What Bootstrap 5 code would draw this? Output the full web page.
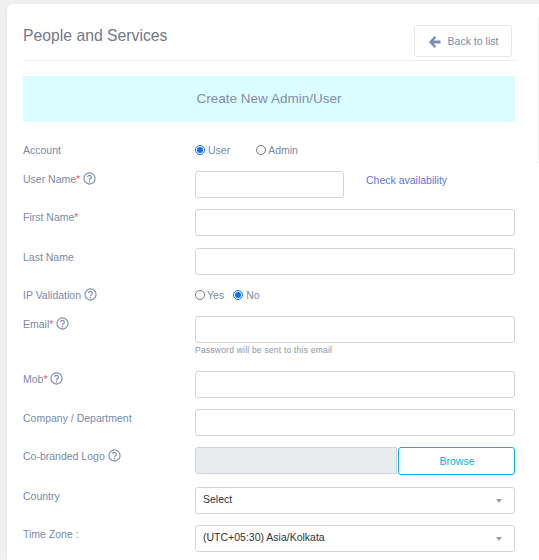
<!DOCTYPE html>
<html lang="en"><head><meta charset="utf-8"><title>People and Services</title>
<link href="https://cdn.jsdelivr.net/npm/bootstrap@5.3.0/dist/css/bootstrap.min.css" rel="stylesheet">
<style>
html,body{height:560px;overflow:hidden}
body{background:#eef0f2;font-family:"Liberation Sans",Arial,sans-serif;font-size:11px;color:#7a8ba8;padding:4px 0 0 7px}
.sheet{background:#fff;border-radius:6px 0 0 0;height:556px;padding:21px 24px 0 16px;box-shadow:-1px 0 3px rgba(0,0,0,.03);position:relative}
.sheet::after{content:"";position:absolute;right:0;top:14px;height:145px;width:1px;background:#eeeff2}
.pagehead{height:36px;border-bottom:1px solid #ebebeb;margin-bottom:15px}
.pagetitle{font-size:15.75px;font-weight:400;color:#74788d;margin:1px 0 0;line-height:20px}
.backbtn{width:98px;height:32px;margin-right:3px;border:1px solid #e6e7ec;border-radius:3px;font-size:10.5px;color:#7a8ba8;padding:1px 0 0;background:#fff;gap:7px}
.banner{background:#dcfdff;height:46px;font-size:13.5px;color:#7f8fa8;margin-bottom:21px}
.lab{width:172px;flex:none;font-size:10.5px;color:#7a8ba8;line-height:13px}
.p1{padding-top:1px}.p2{padding-top:2px}.p3{padding-top:3px}
.req{color:#f1556c}
.tip{width:13px;height:13px;vertical-align:-2px}
.fld{height:27px;border:1px solid #d2d3dd;border-radius:3px;background:#fff;padding:0 8px;font-size:10.5px;color:#333;box-shadow:none}
.rad{width:10px;height:10px;margin:0 3px 0 0;accent-color:#0d6efd;transform:translateY(-1px)}
.rad2{margin-right:2px}
.radtxt{font-size:10.5px;color:#7a8ba8;height:13px}
.radgap{margin-right:26px}.radgap2{margin-right:9px}
.ipline{margin-top:1px}
.chk{font-size:10.5px;color:#5a77e8;text-decoration:none;margin-left:22px;margin-top:3px;line-height:13px}
.hint{font-size:8.5px;color:#8b97a8;line-height:11px;margin-top:2px;letter-spacing:.22px}
.logofld{background:#e9ecef;flex:1 1 auto;border-radius:3px 0 0 3px}
.browse{width:117px;height:28px;border:1px solid #00bcd4;border-radius:3px;color:#00bcd4;background:#fff;font-size:10.5px;padding:2px 0 0 1px;margin-left:1px}
.sel{font-size:10.5px;color:#333;line-height:22px;position:relative;padding-left:7px}
.sel::after{content:"";position:absolute;right:12px;top:11px;border:3px solid transparent;border-top:4px solid #999ca3;border-bottom:0}
.w-user{width:149px}
.flex-1f{flex:1 1 auto}
.r-acc{height:28px;padding-top:1px}.r-user{height:38px}.r-std{height:39px}.r-ip{height:29px;padding-top:1px}.r-mail{height:55px}.r-mob{height:38px}.r-logo{height:40px}
.row-line{width:492px}
</style></head>
<body>
<main class="sheet">
 <div class="pagehead d-flex justify-content-between align-items-start row-line">
  <h1 class="pagetitle">People and Services</h1>
  <a class="btn backbtn d-flex align-items-center justify-content-center" href="#" role="button">
   <svg width="13" height="12" viewBox="0 0 13 12" aria-hidden="true"><path d="M6.500 0 1 6l5.500 6 1.700-1.800L5.600 7.600H12.500V4.400H5.600L8.200 1.800z" fill="#7890ad"/></svg>Back to list</a>
 </div>
 <div class="banner d-flex align-items-center justify-content-center row-line">Create New Admin/User</div>
 <form class="row-line">
  <div class="d-flex r-acc"><div class="lab">Account</div>
   <div class="d-flex align-items-center radtxt align-self-start"><input class="rad" type="radio" name="ac" checked><span class="radgap">User</span><input class="rad rad2" type="radio" name="ac"><span>Admin</span></div></div>
  <div class="d-flex r-user"><div class="lab p1">User Name<span class="req">*</span> <svg class="tip" viewBox="0 0 14 14"><use href="#q"/></svg></div>
   <input class="fld w-user" type="text" aria-label="User Name"><a class="chk" href="#">Check availability</a></div>
  <div class="d-flex r-std"><div class="lab p2">First Name<span class="req">*</span></div><input class="fld flex-1f" type="text" aria-label="First Name"></div>
  <div class="d-flex r-std"><div class="lab p3">Last Name</div><input class="fld flex-1f" type="text" aria-label="Last Name"></div>
  <div class="d-flex r-ip"><div class="lab">IP Validation <svg class="tip" viewBox="0 0 14 14"><use href="#q"/></svg></div>
   <div class="d-flex align-items-center radtxt align-self-start ipline"><input class="rad rad2" type="radio" name="ip"><span class="radgap2">Yes</span><input class="rad" type="radio" name="ip" checked><span>No</span></div></div>
  <div class="d-flex r-mail"><div class="lab p1">Email<span class="req">*</span> <svg class="tip" viewBox="0 0 14 14"><use href="#q"/></svg></div>
   <div class="flex-1f"><input class="fld w-100 d-block" type="text" aria-label="Email"><div class="hint">Password will be sent to this email</div></div></div>
  <div class="d-flex r-mob"><div class="lab p1">Mob<span class="req">*</span> <svg class="tip" viewBox="0 0 14 14"><use href="#q"/></svg></div><input class="fld flex-1f" type="text" aria-label="Mob"></div>
  <div class="d-flex r-mob"><div class="lab p3">Company / Department</div><input class="fld flex-1f" type="text" aria-label="Company"></div>
  <div class="d-flex r-logo"><div class="lab p2">Co-branded Logo <svg class="tip" viewBox="0 0 14 14"><use href="#q"/></svg></div>
   <div class="d-flex flex-1f align-items-start"><div class="fld logofld"></div><button class="btn browse" type="button">Browse</button></div></div>
  <div class="d-flex r-mob"><div class="lab p3">Country</div><div class="fld flex-1f sel">Select</div></div>
  <div class="d-flex r-mob"><div class="lab p3">Time Zone :</div><div class="fld flex-1f sel">(UTC+05:30) Asia/Kolkata</div></div>
 </form>
</main>
<svg width="0" height="0" class="d-block" aria-hidden="true"><defs><g id="q"><circle cx="7" cy="7" r="6" fill="none" stroke="#7a8ba8" stroke-width="1.200"/><path d="M5 5.500a2 2 0 1 1 3.100 1.700c-.7.400-1.100.800-1.100 1.600" fill="none" stroke="#7a8ba8" stroke-width="1.200"/><circle cx="7" cy="10.600" r=".8" fill="#7a8ba8"/></g></defs></svg>
<script src="https://cdn.jsdelivr.net/npm/bootstrap@5.3.0/dist/js/bootstrap.bundle.min.js"></script>
</body></html>
